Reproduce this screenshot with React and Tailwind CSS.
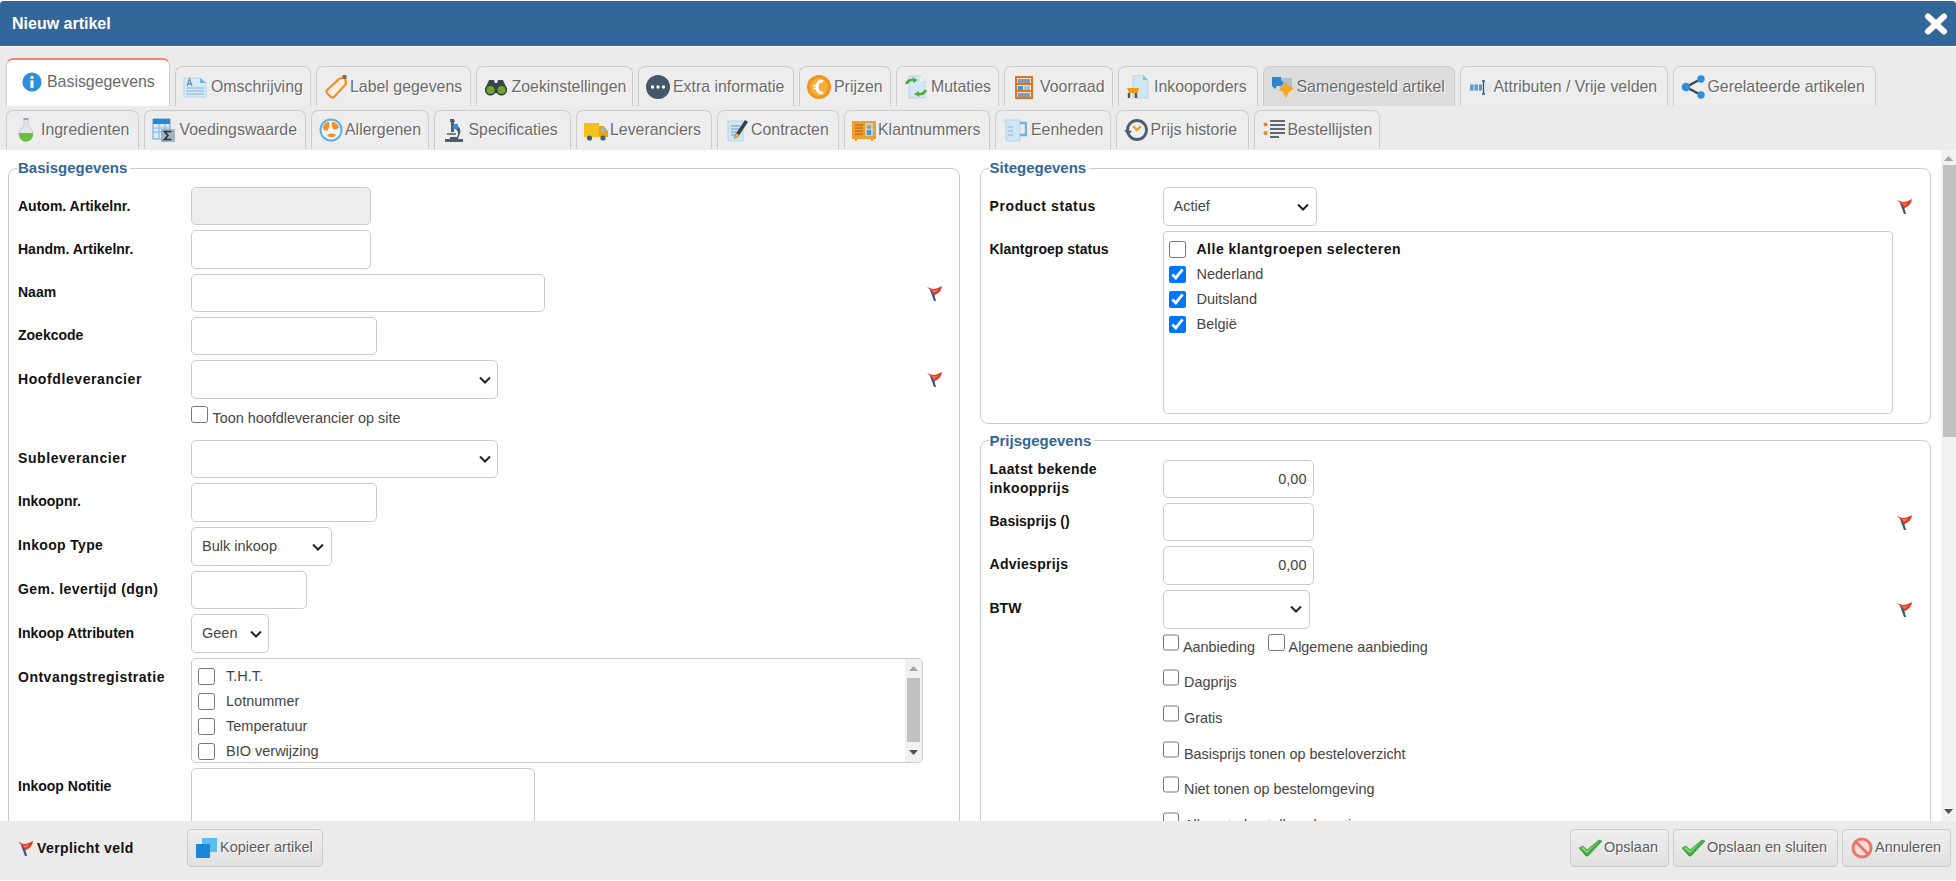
import React from "react";

// small raster-like icons, redrawn by hand
const Ic = ({ s = 24, children, className = "" }) => (
  <svg width={s} height={s} viewBox="0 0 24 24" className={`shrink-0 ${className}`}>{children}</svg>
);

const icons = {
  info: <Ic s={20}><circle cx="12" cy="12" r="11.500" fill="#2b8fd9" /><rect x="10.200" y="10" width="3.600" height="9" fill="#fff" /><circle cx="12" cy="6.500" r="2" fill="#fff" /></Ic>,
  omschrijving: <Ic><path d="M1 3h16l6 5v14H1z" fill="#d7ebf7" stroke="#a9d0e8" strokeWidth=".8" /><path d="M17 3v5h6z" fill="#6fb4e0" /><path d="M4 11l2.500-7L9 11M5 9h3" fill="none" stroke="#6a94b4" strokeWidth="1.300" /><path d="M3 13h18M3 16h18M3 19h18" stroke="#7fb2d3" strokeWidth="1.200" /></Ic>,
  label: <Ic><path d="M15 4l6-2 1 7L10 22a2.500 2.500 0 0 1-3 0l-4-4a2.500 2.500 0 0 1 0-3z" fill="#fdeedd" stroke="#ee8e2e" strokeWidth="2.200" /><rect x="18.500" y="0" width="4" height="4" fill="#8a6a4a" /></Ic>,
  binoculars: <Ic><path d="M5 5h5l1 3h2l1-3h5l4 9-1 4H2l-1-4z" fill="#3c4a50" /><circle cx="6.500" cy="15" r="4.800" fill="#6fa32e" stroke="#33403f" strokeWidth="1.400" /><circle cx="17.500" cy="15" r="4.800" fill="#6fa32e" stroke="#33403f" strokeWidth="1.400" /></Ic>,
  extra: <Ic><circle cx="12" cy="12" r="12" fill="#44586a" /><circle cx="6.500" cy="12" r="1.700" fill="#fff" /><circle cx="12" cy="12" r="1.700" fill="#fff" /><circle cx="17.500" cy="12" r="1.700" fill="#fff" /></Ic>,
  prijzen: <Ic><circle cx="12" cy="12" r="12" fill="#f2941a" /><circle cx="12" cy="12" r="9" fill="#f6ae3a" /><path d="M16 6.500c-3-1.500-6 .5-6 5.500s3 7 6 5.500" fill="none" stroke="#fff" strokeWidth="3" /><path d="M6 10.500h6M6 13.500h6" stroke="#fff" strokeWidth="1.400" /></Ic>,
  mutaties: <Ic><path d="M5 1h11l5 5v17H5z" fill="#d2e8f6" stroke="#aacfe6" strokeWidth=".8" /><path d="M16 1v5h5z" fill="#eef5fa" /><path d="M1 9c1-4 4-6 8-5l-1-2 6 3-5 3V6C6 6 5 7 4 9z" fill="#55ab3a" /><path d="M23 15c-1 4-4 6-8 5l1 2-6-3 5-3v2c3 0 4-1 5-3z" fill="#55ab3a" /></Ic>,
  voorraad: <Ic><rect x="4" y="1" width="16" height="22" fill="#e8e6e0" /><path d="M4 1v23M20 1v23M4 2h16M4 9h16M4 16h16M4 23h16" stroke="#e2721b" strokeWidth="2" /><rect x="6" y="4" width="12" height="4" fill="#8a99a3" /><rect x="6" y="11" width="5" height="4" fill="#3b97d6" /><rect x="12" y="11" width="6" height="4" fill="#9cc4de" /><rect x="6" y="18" width="12" height="4" fill="#8a99a3" /></Ic>,
  inkoop: <Ic><path d="M7 0h10l5 5v18H7z" fill="#cfe6f5" stroke="#a9cfe6" strokeWidth=".8" /><path d="M17 0v5h5z" fill="#8cc4e8" /><path d="M1 13h12l-1 5H3z" fill="#f39a17" /><path d="M3 18v5M10 18v5" stroke="#44586a" strokeWidth="2.400" /></Ic>,
  samengesteld: <Ic><path d="M9 3h12v12H9z" fill="#b4bfc7" /><path d="M1 2h9v3l3 3-3 3H6l-2 3-3-3z" fill="#2c87d3" /><path d="M15 7l2.500 4 5.500 2-3 3-2 1-3 6-3-6-4-2 3-3 2-2z" fill="#f5a623" /></Ic>,
  attributen: <Ic><rect x="1" y="8" width="22" height="9" fill="#e3e8ec" /><rect x="2" y="9.500" width="3.500" height="6" fill="#5a9bd0" /><rect x="6.500" y="9.500" width="3.500" height="6" fill="#5a9bd0" /><rect x="11" y="9.500" width="3" height="6" fill="#5a9bd0" /><path d="M14 6h3M14 19h3M15.500 6v13" stroke="#44586a" strokeWidth="1.300" fill="none" /></Ic>,
  share: <Ic><path d="M20 4L5 12l15 8" fill="none" stroke="#3a4a55" strokeWidth="2.500" /><circle cx="20" cy="4" r="3.700" fill="#2c8edb" /><circle cx="5" cy="12" r="4.300" fill="#2c8edb" /><circle cx="20" cy="20" r="3.700" fill="#2c8edb" /></Ic>,
  flask: <Ic><path d="M10 1h4v7c3 2 5 5 5 8a7 7 0 0 1-14 0c0-3 2-6 5-8z" fill="#e4e8ea" stroke="#b6bfc4" strokeWidth=".8" /><path d="M5.200 15h13.600a7 7 0 1 1-13.600 0z" fill="#6cbd3c" /><rect x="9.500" y="0" width="5" height="2" fill="#98a3aa" /></Ic>,
  table: <Ic><rect x="1" y="1" width="17" height="20" fill="#d9ecf8" stroke="#3d94d4" strokeWidth=".8" /><rect x="1" y="1" width="17" height="5" fill="#2c87d3" /><path d="M1 10h17M1 14h17M7 6v15M13 6v15" stroke="#7eb9e2" strokeWidth="1" /><rect x="9" y="11" width="14" height="13" fill="#a4b2bb" /><path d="M19.500 13.500h-7l3.500 4-3.500 4h7" fill="none" stroke="#1f3342" strokeWidth="1.600" /></Ic>,
  allergen: <Ic><circle cx="12" cy="12" r="11.500" fill="#5cb0e6" /><circle cx="12" cy="12" r="9.500" fill="#eef4f8" /><path d="M4 9c1-4 4-5 6-5 1 3 0 7-2 9-2 0-4-1-4-4z" fill="#f0922c" /><path d="M13 4c3 0 6 2 7 5-2 3-5 3-6 2-1-2-2-5-1-7z" fill="#f0922c" /><path d="M8 17c3-2 7-2 9 0-2 3-7 3-9 0z" fill="#f0922c" /></Ic>,
  micro: <Ic><path d="M3 21h18v3H3z" fill="#4a6070" /><path d="M8 1h4l1 3h-1v10H9V4H8z" fill="#4a6070" /><path d="M13 7c5 1 7 6 4 11l-1 3H8v-2h7c2-3 1-7-2-8z" fill="#4a6070" /><rect x="11" y="6" width="5" height="5" fill="#2c8edb" /><rect x="5" y="15" width="9" height="2" fill="#6f8290" /></Ic>,
  truck: <Ic><rect x="0" y="5" width="15" height="14" fill="#f4c21f" /><path d="M15 8h5l4 5v6h-9z" fill="#e9a21c" /><path d="M17 9.500h3l2 3.500h-5z" fill="#7fc0e8" /><circle cx="5.500" cy="20" r="2.600" fill="#4a5f6e" /><circle cx="19" cy="20" r="2.600" fill="#4a5f6e" /></Ic>,
  contract: <Ic><path d="M3 3h15v20H3z" fill="#cfe6f5" stroke="#a9cfe6" strokeWidth=".8" /><path d="M6 8h9M6 11h9M6 14h7M6 17h5" stroke="#5e9cc6" strokeWidth="1.100" /><path d="M20 2l3 2-10 15-4 2 1-4z" fill="#31414c" /><path d="M11 15l3 2-1 2-4 2z" fill="#f0b429" /></Ic>,
  klant: <Ic><rect x="0" y="3" width="24" height="18" fill="#f59d2a" /><path d="M3 7h8M3 10h8M3 13h8M3 16h8" stroke="#b87620" strokeWidth="1.300" /><rect x="13" y="5" width="8" height="13" fill="#a9d4ef" /><circle cx="17" cy="9" r="2" fill="#e88a24" /><rect x="15" y="12" width="4" height="5" fill="#3b97d6" /><path d="M4 21v2M20 21v2" stroke="#f59d2a" strokeWidth="2" /></Ic>,
  jug: <Ic><path d="M1 2h16v20a1 1 0 0 1-1 1H4a1 1 0 0 1-1-1V6z" fill="#cfe6f5" stroke="#a9cfe6" strokeWidth=".8" /><path d="M17 5h6v12h-6" fill="none" stroke="#6fb4e0" strokeWidth="2.400" /><path d="M5 9h5M5 13h5M5 17h5" stroke="#7fb5d8" strokeWidth="1.200" /></Ic>,
  clock: <Ic><circle cx="13" cy="12" r="9.500" fill="#eceef0" stroke="#4a5f6e" strokeWidth="2.800" /><path d="M9 8l4 4 4-4" fill="none" stroke="#f39a17" strokeWidth="2.200" /><path d="M0 12l4 5 4-4z" fill="#4a5f6e" /></Ic>,
  list: <Ic><circle cx="3.500" cy="6.500" r="2" fill="#ef7d22" /><circle cx="3.500" cy="15" r="2" fill="#ef7d22" /><path d="M8 3h15M8 7h15M8 11h15M8 15h15M8 19h9" stroke="#5b6a74" strokeWidth="2" /></Ic>,
};

const rowOne = [
  { label: "Basisgegevens", icon: icons.info, w: "w-[164px]", active: true },
  { label: "Omschrijving", icon: icons.omschrijving, w: "w-[136px]" },
  { label: "Label gegevens", icon: icons.label, w: "w-[154.500px]", gap: "gap-[2px]" },
  { label: "Zoekinstellingen", icon: icons.binoculars, w: "w-[157.500px]" },
  { label: "Extra informatie", icon: icons.extra, w: "w-[156px]", gap: "gap-[3px]" },
  { label: "Prijzen", icon: icons.prijzen, w: "w-[92px]", gap: "gap-[3px]" },
  { label: "Mutaties", icon: icons.mutaties, w: "w-[103px]", gap: "gap-[3px]" },
  { label: "Voorraad", icon: icons.voorraad, w: "w-[109px]", gap: "gap-[4px]" },
  { label: "Inkooporders", icon: icons.inkoop, w: "w-[139.500px]" },
  { label: "Samengesteld artikel", icon: icons.samengesteld, w: "w-[192px]", gap: "gap-[2px]" },
  { label: "Attributen / Vrije velden", icon: icons.attributen, w: "w-[208px]", gap: "gap-[2px]" },
  { label: "Gerelateerde artikelen", icon: icons.share, w: "w-[203.500px]", gap: "gap-[3px]" },
];

const rowTwo = [
  { label: "Ingredienten", icon: icons.flask, w: "w-[132.500px]", gap: "gap-[3px]" },
  { label: "Voedingswaarde", icon: icons.table, w: "w-[162.500px]" },
  { label: "Allergenen", icon: icons.allergen, w: "w-[117.500px]", gap: "gap-[2px]" },
  { label: "Specificaties", icon: icons.micro, w: "w-[137.500px]", gap: "gap-[3px]" },
  { label: "Leveranciers", icon: icons.truck, w: "w-[136px]", gap: "gap-[2px]" },
  { label: "Contracten", icon: icons.contract, w: "w-[122px]", gap: "gap-[2px]" },
  { label: "Klantnummers", icon: icons.klant, w: "w-[146px]", gap: "gap-[2px]" },
  { label: "Eenheden", icon: icons.jug, w: "w-[115.500px]" },
  { label: "Prijs historie", icon: icons.clock, w: "w-[133px]", gap: "gap-[3px]" },
  { label: "Bestellijsten", icon: icons.list, w: "w-[126px]", gap: "gap-[2px]" },
];

function Tab({ tab, h }) {
  const gap = tab.gap || "gap-[4px]";
  const tone = tab.active
    ? "bg-white border-t-2 border-t-[#f8806f] h-[48px] pl-[15px] gap-[5px] pb-[3px]"
    : tab.label === "Samengesteld artikel"
    ? `bg-[#dcdcdc] ${h} pl-[7px] ${gap}`
    : `bg-[#ededed] ${h} pl-[7px] ${gap}`;
  return (
    <div className={`${tab.w} ${tone} flex items-center shrink-0 rounded-t-[7px] border border-b-0 border-[#cccccc] text-[15.900px] text-[#6a6a6a] [text-shadow:1px_1px_0_#fff] whitespace-nowrap`}>
      {tab.icon}
      <span>{tab.label}</span>
    </div>
  );
}

const Flag = ({ className = "" }) => (
  <svg width="15" height="15" viewBox="0 0 15 15" className={`shrink-0 ${className}`}>
    <path d="M3 4l4 11h2L6 4z" fill="#34558c" />
    <path d="M0 1c2 .5 4 2 7 2 3-.5 5-1.500 8-3-.5 3-2 6-4 7-2 1.500-3 2-4 2-1-3-4-5-7-8z" fill="#e0371f" />
    <path d="M4 3c2 1.500 4 1.500 8 0-2 2-3 3-5 4z" fill="#f4705a" />
  </svg>
);

const Row = ({ label, track = "", lift = false, children, flag }) => (
  <div className="flex items-start mb-[5px]">
    <div className={`w-[173px] h-[38px] shrink-0 flex items-center text-[14px] font-bold leading-[19px] text-[#111] whitespace-nowrap ${track} ${lift ? "pb-[2px]" : ""}`}>{label}</div>
    {children}
    {flag && <Flag className="ml-auto mt-[12px]" />}
  </div>
);

const inputCls = "block border border-[#cccccc] rounded-[5px] bg-white text-[14.500px] text-[#444] outline-none";
const Input = ({ cls, ...rest }) => <input readOnly className={`${inputCls} ${cls}`} {...rest} />;

// select with the bold chevron of the picture on top of it
const Select = ({ cls, options = [""], chevron = "right-[7px]" }) => (
  <div className={`relative shrink-0 ${cls}`}>
    <select className={`${inputCls} w-full h-full appearance-none pl-[10px]`}>
      {options.map((o) => <option key={o}>{o}</option>)}
    </select>
    <svg width="12" height="8" viewBox="0 0 12 8" className={`absolute top-1/2 -translate-y-1/2 pointer-events-none ${chevron}`}>
      <path d="M1 1.500l5 5 5-5" fill="none" stroke="#222" strokeWidth="2" />
    </svg>
  </div>
);

const Check = ({ label, gap = "gap-[5px]", textTop = "mt-[3px]" }) => (
  <label className={`inline-flex items-start ${gap} text-[14.400px] leading-[19px] text-[#444]`}>
    <input type="checkbox" readOnly className="w-[16.500px] h-[17px] m-0 shrink-0" />
    <span className={`${textTop} whitespace-nowrap`}>{label}</span>
  </label>
);

const BoxItem = ({ label, checked, bold, h = "h-[25px]" }) => (
  <label className={`flex items-center ${h} gap-[11px] ${bold ? "text-[14px] font-bold tracking-[0.5px] text-[#111]" : "text-[14.500px] text-[#444]"}`}>
    <input type="checkbox" defaultChecked={checked} className="w-[17px] h-[17px] m-0 shrink-0" />
    <span className="whitespace-nowrap">{label}</span>
  </label>
);

const Arrow = ({ up, fill }) => (
  <svg width="9" height="5" viewBox="0 0 9 5"><path d={up ? "M4.500 0L9 5H0z" : "M0 0h9L4.500 5z"} fill={fill} /></svg>
);

const legendCls = "-ml-px pl-px pr-[3px] text-[15px] leading-[18px] font-bold text-[#336699]";

function Basisgegevens() {
  return (
    <fieldset className="w-[952px] shrink-0 border border-[#cccccc] rounded-[8px] pl-[9px] pr-[17px] pt-[10px] pb-[10px] m-0">
      <legend className={legendCls}>Basisgegevens</legend>
      <Row label="Autom. Artikelnr."><Input cls="w-[180px] h-[38px] !bg-[#eeeeee]" disabled /></Row>
      <Row label="Handm. Artikelnr."><Input cls="w-[180px] h-[39px]" /></Row>
      <Row label="Naam" lift flag><Input cls="w-[354px] h-[38px]" /></Row>
      <Row label="Zoekcode" lift><Input cls="w-[186px] h-[38px]" /></Row>
      <Row label="Hoofdleverancier" track="tracking-[0.6px]" flag><Select cls="w-[307px] h-[39px]" /></Row>
      <div className="pl-[173px] pt-[2px] h-[31px] mb-[5px]"><Check label="Toon hoofdleverancier op site" /></div>
      <Row label="Subleverancier" lift track="tracking-[0.6px]"><Select cls="w-[307px] h-[38px]" /></Row>
      <Row label="Inkoopnr." lift><Input cls="w-[186px] h-[39px]" /></Row>
      <Row label="Inkoop Type" lift track="tracking-[0.35px]"><Select cls="w-[141px] h-[39px]" chevron="right-[8px]" options={["Bulk inkoop"]} /></Row>
      <Row label="Gem. levertijd (dgn)" lift track="tracking-[0.45px]"><Input cls="w-[116px] h-[38px]" /></Row>
      <Row label="Inkoop Attributen"><Select cls="w-[78px] h-[39px]" options={["Geen"]} /></Row>
      <Row label="Ontvangstregistratie" track="tracking-[0.5px]">
        <div className="relative w-[732px] h-[105px] border border-[#cccccc] rounded-[5px] overflow-hidden pl-[6px] pt-[5px]">
          <BoxItem label="T.H.T." />
          <BoxItem label="Lotnummer" />
          <BoxItem label="Temperatuur" />
          <BoxItem label="BIO verwijzing" />
          <div className="absolute right-0 top-0 bottom-0 w-[17px] bg-[#f1f1f1] flex flex-col items-center pt-[7px] pb-[7px] justify-between">
            <Arrow up fill="#a3a3a3" />
            <div className="w-[13px] h-[64px] bg-[#c1c1c1] -mt-[1px]" />
            <Arrow fill="#505050" />
          </div>
        </div>
      </Row>
      <Row label="Inkoop Notitie" lift><textarea readOnly className={`${inputCls} w-[344px] h-[104px] resize-none`} /></Row>
    </fieldset>
  );
}

function RightColumn() {
  return (
    <div className="w-[951px] shrink-0 flex flex-col">
      <fieldset className="border border-[#cccccc] rounded-[8px] pl-[9px] pr-[18px] pt-[10px] pb-[9px] m-0">
        <legend className={legendCls}>Sitegegevens</legend>
        <Row label="Product status" track="tracking-[0.6px]" flag><Select cls="w-[154px] h-[39px]" options={["Actief"]} chevron="right-[8px]" /></Row>
        <div className="flex items-start">
          <div className="w-[173px] h-[38px] pb-[2px] shrink-0 flex items-center text-[14px] font-bold text-[#111]">Klantgroep status</div>
          <div className="w-[730px] h-[182.500px] border border-[#cccccc] rounded-[4px] pl-[5px] pt-[2px]">
            <div className="pt-[2px]"><BoxItem label="Alle klantgroepen selecteren" bold h="h-[26px]" /></div>
            <BoxItem label="Nederland" checked />
            <BoxItem label="Duitsland" checked />
            <BoxItem label="België" checked />
          </div>
        </div>
      </fieldset>
      <fieldset className="mt-[8px] border border-[#cccccc] rounded-[8px] pl-[9px] pr-[18px] pt-[10px] pb-[10px] m-0">
        <legend className={legendCls}>Prijsgegevens</legend>
        <Row label={<span>Laatst bekende<br />inkoopprijs</span>} track="tracking-[0.4px]"><Input cls="w-[151px] h-[38px] text-right pr-[6px]" defaultValue="0,00" /></Row>
        <Row label="Basisprijs ()" flag><Input cls="w-[151px] h-[38px]" /></Row>
        <Row label="Adviesprijs" track="tracking-[0.3px]"><Input cls="w-[151px] h-[39px] text-right pr-[6px]" defaultValue="0,00" /></Row>
        <Row label="BTW" flag><Select cls="w-[147px] h-[39px]" chevron="right-[8px]" /></Row>
        <div className="pl-[173px]">
          <div className="flex h-[35.700px] gap-[13px]">
            <Check label="Aanbieding" gap="gap-[4px]" textTop="mt-[4px]" />
            <Check label="Algemene aanbieding" gap="gap-[4px]" textTop="mt-[4px]" />
          </div>
          <div className="h-[35.700px]"><Check label="Dagprijs" textTop="mt-[4px]" /></div>
          <div className="h-[35.700px]"><Check label="Gratis" textTop="mt-[4px]" /></div>
          <div className="h-[35.700px]"><Check label="Basisprijs tonen op besteloverzicht" textTop="mt-[4px]" /></div>
          <div className="h-[35.700px]"><Check label="Niet tonen op bestelomgeving" textTop="mt-[4px]" /></div>
          <div className="h-[35.700px]"><Check label="Alleen te bestellen als optie" textTop="mt-[4px]" /></div>
        </div>
      </fieldset>
    </div>
  );
}

const GreenCheck = () => (
  <svg width="23" height="18" viewBox="0 0 23 18" className="shrink-0">
    <path d="M0 9l4-2 4 4L20 1l3 1L9 17h-2z" fill="#3fae3f" stroke="#2b8a2f" strokeWidth=".6" />
    <path d="M2 9l2-1 4 4L20 2l-12 12z" fill="#8fdc7c" />
  </svg>
);

const Cancel = () => (
  <svg width="22" height="22" viewBox="0 0 22 22" className="shrink-0">
    <circle cx="11" cy="11" r="9" fill="#f7dcd8" stroke="#e7796f" strokeWidth="3" />
    <path d="M5 5l12 12" stroke="#e7796f" strokeWidth="3" />
  </svg>
);

const CopyIcon = () => (
  <svg width="21" height="20" viewBox="0 0 21 20" className="shrink-0">
    <rect x="6" y="0" width="15" height="14" fill="#59bdf0" />
    <rect x="0" y="6" width="14" height="14" fill="#1c87d8" />
  </svg>
);

const Btn = ({ w, icon, label, gap = "gap-[2px]" }) => (
  <div className={`${w} ${gap} pl-[8px] h-[38px] flex items-center shrink-0 rounded-[4px] border border-[#cccccc] bg-gradient-to-b from-[#efefef] to-[#e0e0e0] text-[14.500px] text-[#5a5a5a] [text-shadow:1px_1px_0_#fff] whitespace-nowrap`}>
    {icon}
    <span>{label}</span>
  </div>
);

export default function App() {
  return (
    <div className="w-[1956px] h-[881px] bg-white pt-px flex flex-col overflow-hidden font-['Liberation_Sans',Arial,sans-serif]">
      <header className="h-[45px] shrink-0 bg-[#336699] rounded-t-[4px] flex items-center justify-between pl-[12px] pr-[8px] text-white">
        <span className="text-[16px] font-bold">Nieuw artikel</span>
        <svg width="24" height="22" viewBox="0 0 24 22"><path d="M4 3.500L20 18.500M20 3.500L4 18.500" stroke="#fff" strokeWidth="6" strokeLinecap="round" /></svg>
      </header>

      <nav className="h-[103px] shrink-0 mt-px -mb-px bg-[#ebebeb] pl-[6px] pt-[11px]">
        <div className="flex items-end gap-[5px]">
          {rowOne.map((t) => <Tab key={t.label} tab={t} h="h-[40px]" />)}
        </div>
        <div className="flex gap-[5px] mt-[4px]">
          {rowTwo.map((t) => <Tab key={t.label} tab={t} h="h-[39px]" />)}
        </div>
      </nav>

      <main className="flex-1 min-h-0 flex overflow-hidden">
        <div className="flex-1 min-w-0 flex items-start gap-[19.500px] pl-[8px] pt-[10px]">
          <Basisgegevens />
          <RightColumn />
        </div>
        <div className="w-[15px] shrink-0 bg-[#f1f1f1] flex flex-col items-center py-[7px]">
          <Arrow up fill="#a3a3a3" />
          <div className="w-[13px] h-[272px] bg-[#c1c1c1] ml-[2px] mt-[4px] mb-auto" />
          <Arrow fill="#505050" />
        </div>
      </main>

      <footer className="h-[59px] shrink-0 mb-px bg-[#ebebeb] flex items-center pl-[18px] pr-[5px] pb-[5px]">
        <Flag />
        <span className="ml-[4px] text-[14px] font-bold tracking-[0.4px] text-[#111] w-[150px]">Verplicht veld</span>
        <Btn w="w-[136px]" icon={<CopyIcon />} label="Kopieer artikel" gap="gap-[3px]" />
        <div className="ml-auto flex gap-[4px]">
          <Btn w="w-[99px]" icon={<GreenCheck />} label="Opslaan" />
          <Btn w="w-[165px]" icon={<GreenCheck />} label="Opslaan en sluiten" />
          <Btn w="w-[109px]" icon={<Cancel />} label="Annuleren" />
        </div>
      </footer>
    </div>
  );
}
